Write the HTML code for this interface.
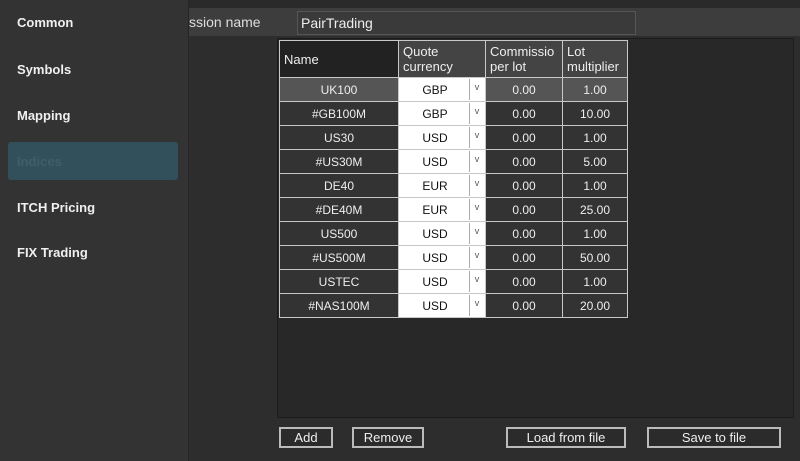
<!DOCTYPE html>
<html><head><style>
body{margin:0;width:800px;height:461px;background:#2d2d2d;font-family:"Liberation Sans",sans-serif;overflow:hidden;position:relative;color:#eee}
.sb{position:absolute;left:0;top:0;width:188px;height:461px;background:#333;border-right:1px solid #262626}
.it{position:absolute;left:17px;font-size:13px;font-weight:bold;color:#f0f0f0}
.sel{position:absolute;left:8px;top:142px;width:170px;height:38px;background:#32505c;border-radius:3px}
.top{position:absolute;left:189px;top:0;width:611px;height:8px;background:#2a2a2a}
.bar{position:absolute;left:189px;top:8px;width:611px;height:28px;background:#3d3d3d}
.inp{position:absolute;left:297px;top:11px;width:337px;height:22px;border:1px solid #555;background:#3a3a3a;font-size:14px;line-height:22px;text-indent:3px}
.box{position:absolute;left:277px;top:38px;width:515px;height:378px;background:#282828;border:1px solid #1c1c1c}
table{position:absolute;left:279px;top:40px;border-collapse:collapse;font-size:12px}
td{border:1px solid #c8c8c8;height:23px;padding:0;text-align:center;background:#333}
th{border:1px solid #c8c8c8;height:36px;font-weight:normal;text-align:left;padding:0 4px;font-size:13px;line-height:15px;background:#444;vertical-align:middle}
td.q{background:#fff;color:#111;position:relative}
td.q span{position:absolute;right:1px;top:1px;width:14px;height:21px;border-left:1px solid #aaa;background:#fff;font-size:9px;line-height:16px;color:#555}
td.q b{font-weight:normal;margin-right:14px}
.btn{position:absolute;top:427px;height:17px;border:2px solid #bbb;background:#2b2b2b;font-size:13px;text-align:center;line-height:17px;color:#eee}
</style></head><body>
<div class="sb">
<div class="it" style="top:15px">Common</div>
<div class="it" style="top:62px">Symbols</div>
<div class="it" style="top:108px">Mapping</div>
<div class="sel"></div><div class="it" style="top:154px;color:#3f5e69">Indices</div>
<div class="it" style="top:200px">ITCH Pricing</div>
<div class="it" style="top:245px">FIX Trading</div>
</div>
<div class="top"></div>
<div class="bar"><span style="position:absolute;left:0;top:6px;font-size:14px;color:#ddd">ssion name</span></div>
<div class="inp">PairTrading</div>
<div class="box"></div>
<table>
<tr><th style="width:110px;background:#222">Name</th><th style="width:78px">Quote<br>currency</th><th style="width:68px;white-space:nowrap;overflow:hidden;max-width:68px">Commissio<br>per lot</th><th style="width:56px">Lot<br>multiplier</th></tr>
<tr><td style="background:#555">UK100</td><td class="q"><b>GBP</b><span>v</span></td><td style="background:#555">0.00</td><td style="background:#555">1.00</td></tr>
<tr><td>#GB100M</td><td class="q"><b>GBP</b><span>v</span></td><td>0.00</td><td>10.00</td></tr>
<tr><td>US30</td><td class="q"><b>USD</b><span>v</span></td><td>0.00</td><td>1.00</td></tr>
<tr><td>#US30M</td><td class="q"><b>USD</b><span>v</span></td><td>0.00</td><td>5.00</td></tr>
<tr><td>DE40</td><td class="q"><b>EUR</b><span>v</span></td><td>0.00</td><td>1.00</td></tr>
<tr><td>#DE40M</td><td class="q"><b>EUR</b><span>v</span></td><td>0.00</td><td>25.00</td></tr>
<tr><td>US500</td><td class="q"><b>USD</b><span>v</span></td><td>0.00</td><td>1.00</td></tr>
<tr><td>#US500M</td><td class="q"><b>USD</b><span>v</span></td><td>0.00</td><td>50.00</td></tr>
<tr><td>USTEC</td><td class="q"><b>USD</b><span>v</span></td><td>0.00</td><td>1.00</td></tr>
<tr><td>#NAS100M</td><td class="q"><b>USD</b><span>v</span></td><td>0.00</td><td>20.00</td></tr>
</table>
<div class="btn" style="left:279px;width:50px">Add</div>
<div class="btn" style="left:352px;width:68px">Remove</div>
<div class="btn" style="left:506px;width:116px">Load from file</div>
<div class="btn" style="left:647px;width:130px">Save to file</div>
</body></html>
